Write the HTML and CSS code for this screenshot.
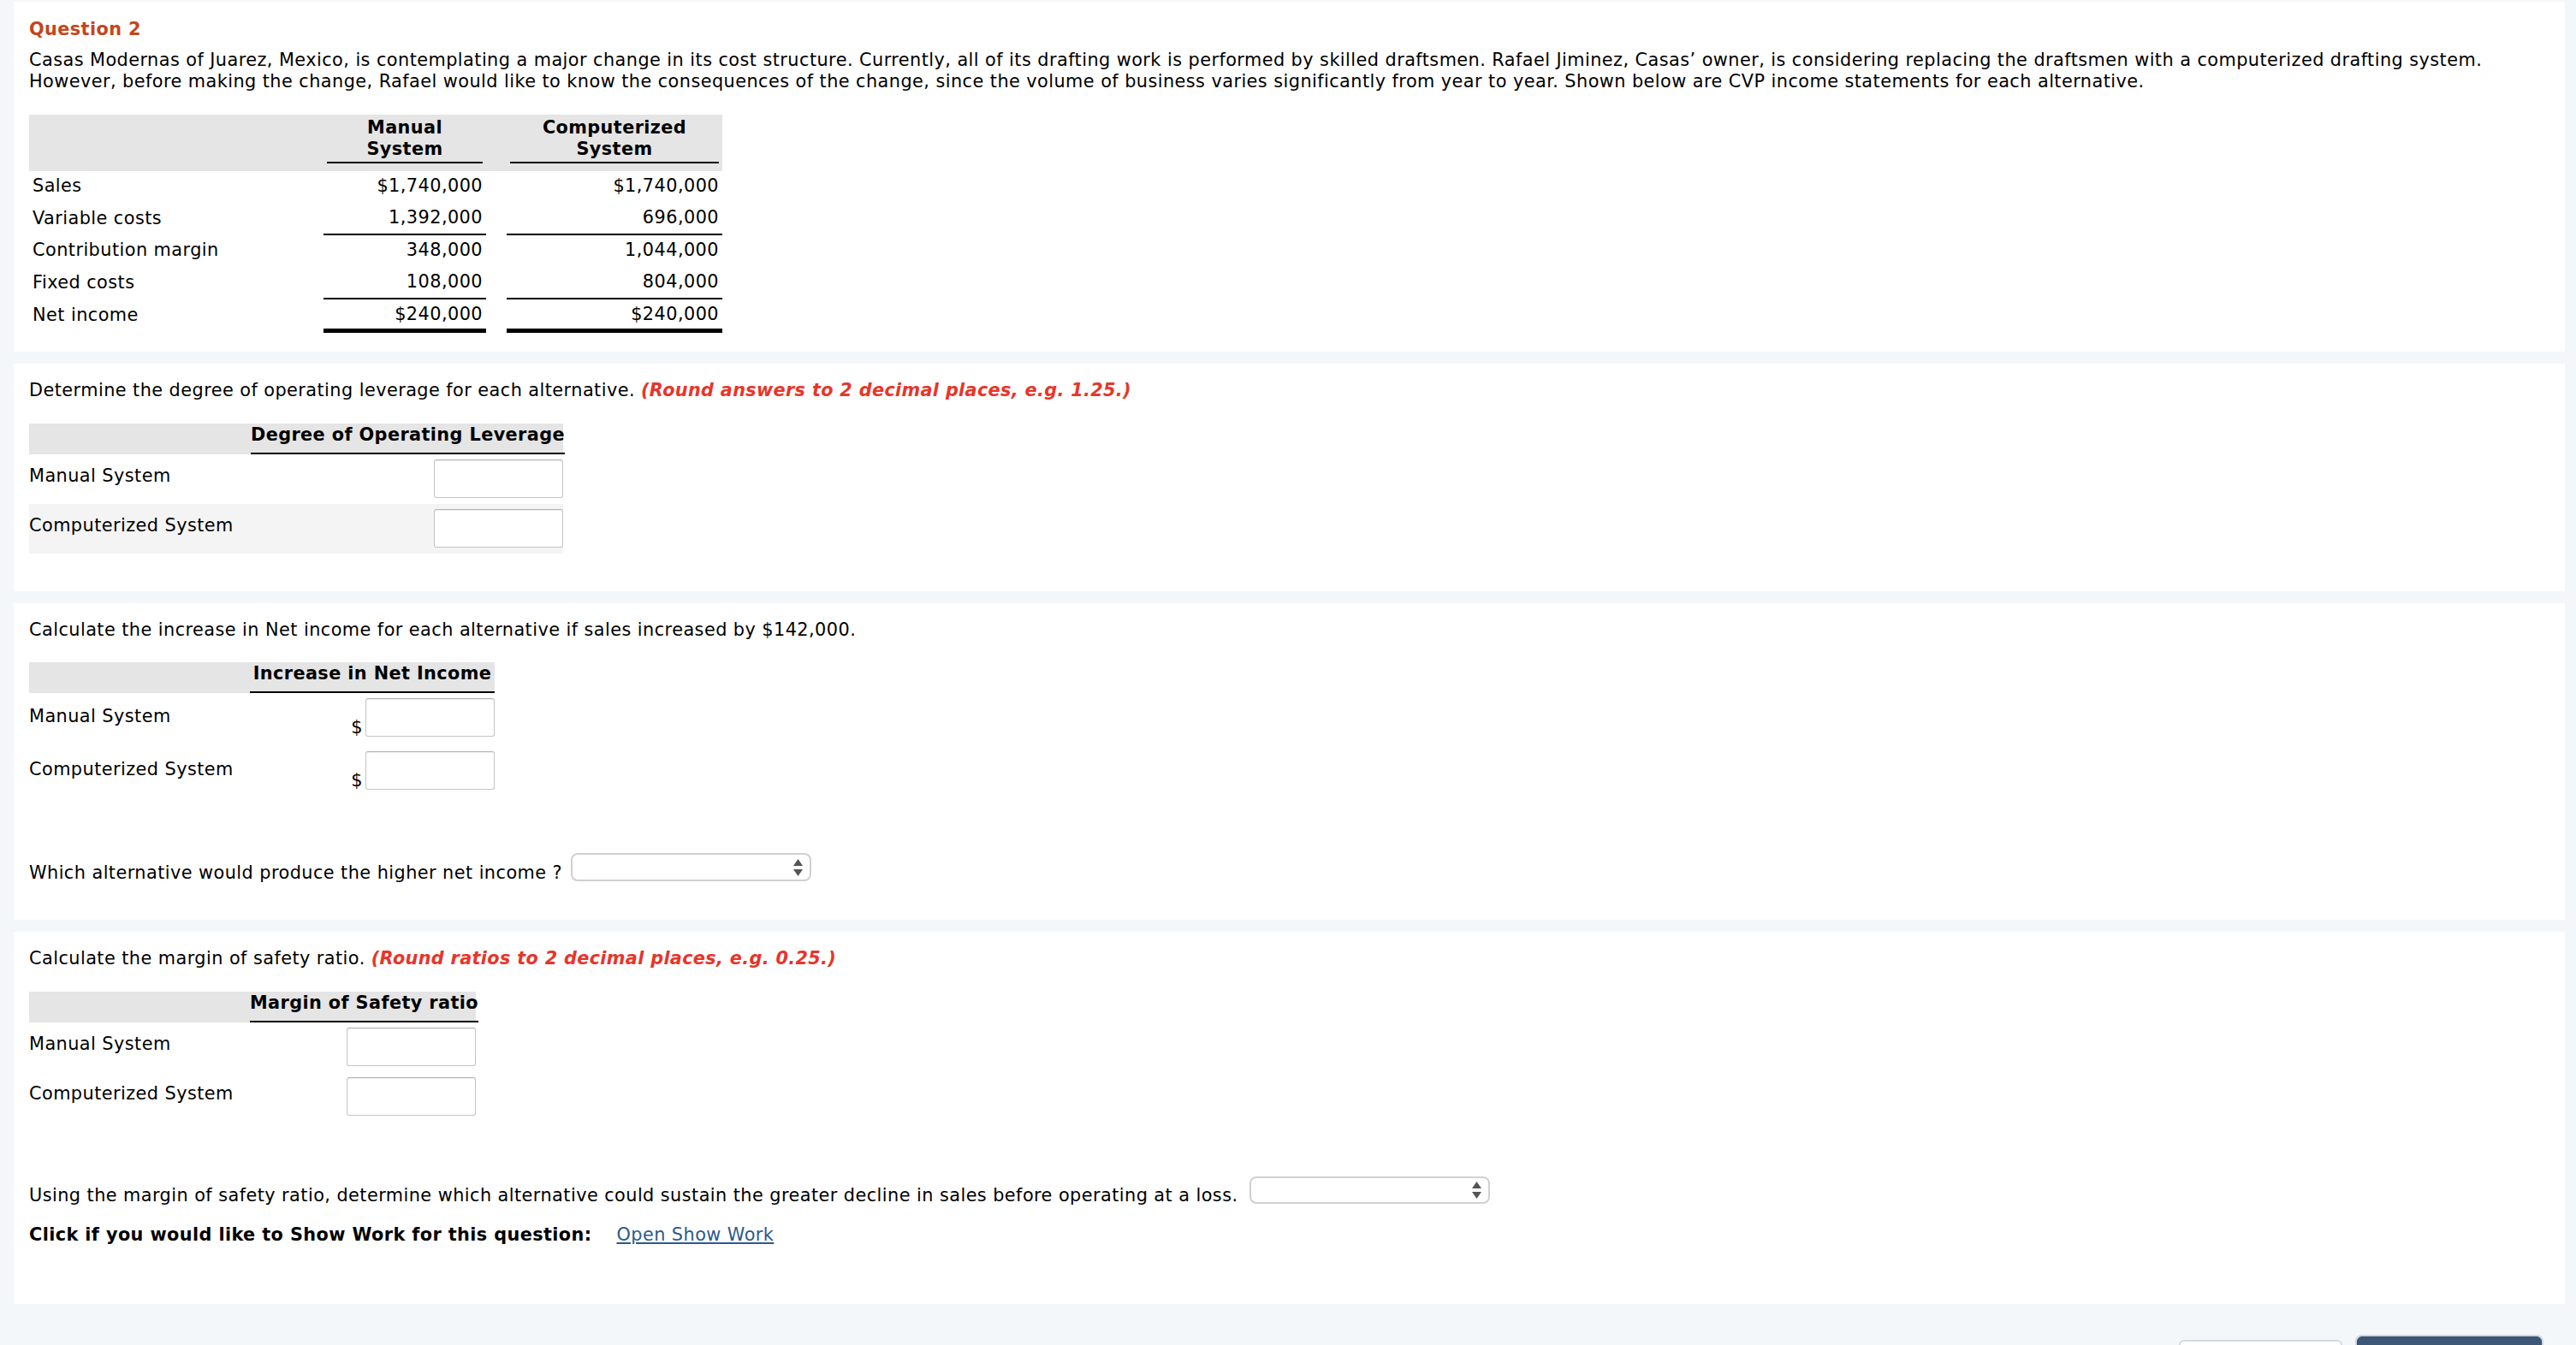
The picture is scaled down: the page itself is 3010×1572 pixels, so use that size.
FILE: index.html
```html
<!DOCTYPE html>
<html lang="en">
<head>
<meta charset="utf-8">
<title>Question 2</title>
<link rel="stylesheet" href="styles.css">
</head>
<body>
<div class="page">
  <section class="panel panel-intro">
    <h2 class="q-title">Question 2</h2>
    <p class="intro">Casas Modernas of Juarez, Mexico, is contemplating a major change in its cost structure. Currently, all of its drafting work is performed by skilled draftsmen. Rafael Jiminez, Casas’ owner, is considering replacing the draftsmen with a computerized drafting system. However, before making the change, Rafael would like to know the consequences of the change, since the volume of business varies significantly from year to year. Shown below are CVP income statements for each alternative.</p>
    <table class="cvp">
      <colgroup>
        <col class="c-label"><col class="c-man"><col class="c-gap"><col class="c-comp">
      </colgroup>
      <thead>
        <tr>
          <th></th>
          <th><span class="h">Manual<br>System</span></th>
          <th></th>
          <th><span class="h">Computerized<br>System</span></th>
        </tr>
      </thead>
      <tbody>
        <tr><td>Sales</td><td class="num">$1,740,000</td><td></td><td class="num">$1,740,000</td></tr>
        <tr class="sub"><td>Variable costs</td><td class="num">1,392,000</td><td></td><td class="num">696,000</td></tr>
        <tr><td>Contribution margin</td><td class="num">348,000</td><td></td><td class="num">1,044,000</td></tr>
        <tr class="sub"><td>Fixed costs</td><td class="num">108,000</td><td></td><td class="num">804,000</td></tr>
        <tr class="total"><td>Net income</td><td class="num">$240,000</td><td></td><td class="num">$240,000</td></tr>
      </tbody>
    </table>
  </section>

  <section class="panel panel-dol">
    <p class="prompt">Determine the degree of operating leverage for each alternative. <span class="hint">(Round answers to 2 decimal places, e.g. 1.25.)</span></p>
    <div class="qtable qt-dol">
      <div class="qt-head"><div class="qt-label"></div><div class="qt-col">Degree of Operating Leverage</div></div>
      <div class="qt-row"><div class="qt-label">Manual System</div><div class="qt-cell"><input class="box" type="text"></div></div>
      <div class="qt-row qt-alt"><div class="qt-label">Computerized System</div><div class="qt-cell"><input class="box" type="text"></div></div>
    </div>
  </section>

  <section class="panel panel-inc">
    <p class="prompt">Calculate the increase in Net income for each alternative if sales increased by $142,000.</p>
    <div class="qtable qt-inc">
      <div class="qt-head"><div class="qt-label"></div><div class="qt-col">Increase in Net Income</div></div>
      <div class="qt-row qt-tall"><div class="qt-label">Manual System</div><div class="qt-cell qt-money"><span class="dollar">$</span><input class="box" type="text"></div></div>
      <div class="qt-row qt-tall"><div class="qt-label">Computerized System</div><div class="qt-cell qt-money"><span class="dollar">$</span><input class="box" type="text"></div></div>
    </div>
    <div class="choice choice-inc">
      <span>Which alternative would produce the higher net income ?</span>
      <div class="select"><svg class="arrows" width="11" height="20" viewBox="0 0 11 20"><path d="M5.5 0 L11 8 L0 8 Z" fill="#555"/><path d="M0 12 L11 12 L5.5 20 Z" fill="#555"/></svg></div>
    </div>
  </section>

  <section class="panel panel-mos">
    <p class="prompt">Calculate the margin of safety ratio. <span class="hint">(Round ratios to 2 decimal places, e.g. 0.25.)</span></p>
    <div class="qtable qt-mos">
      <div class="qt-head"><div class="qt-label"></div><div class="qt-col">Margin of Safety ratio</div></div>
      <div class="qt-row"><div class="qt-label">Manual System</div><div class="qt-cell"><input class="box" type="text"></div></div>
      <div class="qt-row"><div class="qt-label">Computerized System</div><div class="qt-cell"><input class="box" type="text"></div></div>
    </div>
    <div class="choice choice-mos">
      <span>Using the margin of safety ratio, determine which alternative could sustain the greater decline in sales before operating at a loss.</span>
      <div class="select"><svg class="arrows" width="11" height="20" viewBox="0 0 11 20"><path d="M5.5 0 L11 8 L0 8 Z" fill="#555"/><path d="M0 12 L11 12 L5.5 20 Z" fill="#555"/></svg></div>
    </div>
    <p class="showwork"><b class="sw-label">Click if you would like to Show Work for this question:</b><a class="link" href="#">Open Show Work</a></p>
  </section>

  <div class="footer">
    <button class="btn btn-secondary" type="button" aria-label="Save for Later"></button>
    <button class="btn btn-primary" type="button" aria-label="Submit Answer"></button>
  </div>
</div>
</body>
</html>
```
FILE: styles.css
```css
* { box-sizing: border-box; }
html, body { margin: 0; padding: 0; }
body {
  background: #f4f7fa;
  font-family: "DejaVu Sans", Verdana, sans-serif;
  font-size: 20.8px;
  line-height: 25.6px;
  letter-spacing: 0.45px;
  color: #000;
}
.page {
  padding: 2px 13px 0 16px;
  display: flex;
  flex-direction: column;
  gap: 14px;
}
.panel {
  background: #fff;
  padding: 19px 18px 0 18px;
}
.panel-intro { padding-top: 20px; padding-bottom: 22px; }
.panel-dol { padding-bottom: 44px; }
.panel-inc { padding-bottom: 42px; }
.panel-mos { padding-bottom: 68px; }

.q-title {
  margin: 0 0 10px;
  font-size: 20.8px;
  line-height: 25.6px;
  font-weight: bold;
  letter-spacing: 0.4px;
  color: #c4451c;
}
.intro { margin: 0 0 25px; }
.prompt { margin: 0 0 25px; }
.hint { color: #e8352a; font-weight: bold; font-style: italic; letter-spacing: 0.33px; }

/* CVP table */
.cvp { border-collapse: separate; border-spacing: 0; }
.c-label { width: 344px; }
.c-man { width: 190px; }
.c-gap { width: 24px; }
.c-comp { width: 252px; }
.cvp th {
  background: #e5e5e5;
  padding: 3px 4px 9px;
  font-weight: bold;
  letter-spacing: 0.4px;
  vertical-align: bottom;
}
.cvp th .h {
  display: block;
  text-align: center;
  border-bottom: 2px solid #000;
  padding-bottom: 1px;
}
.cvp td {
  padding: 5px 4px 6px;
  white-space: nowrap;
}
.cvp td.num { text-align: right; }
.cvp tr.sub td.num { border-bottom: 2px solid #000; }
.cvp tr.total td.num { border-bottom: 5px solid #000; padding-bottom: 3px; }

/* answer tables */
.qtable { display: flex; flex-direction: column; }
.qt-dol { width: 624px; }
.qt-inc { width: 544px; }
.qt-mos { width: 522px; }
.qt-head {
  display: flex;
  background: #e5e5e5;
  height: 36px;
}
.qt-label { width: 258px; flex: none; }
.qt-dol .qt-label { width: 259px; }
.qt-col {
  flex: 1;
  font-weight: bold;
  letter-spacing: 0.4px;
  text-align: center;
  white-space: nowrap;
  padding-top: 1px;
  border-bottom: 2px solid #000;
}
.qt-row {
  display: flex;
  align-items: flex-start;
  height: 58px;
}
.qt-row .qt-label { padding-top: 13.5px; }
.qt-alt { background: #f4f4f4; }
.qt-cell {
  flex: 1;
  display: flex;
  justify-content: flex-end;
  padding-top: 6px;
}
.qt-tall { height: 62px; }
.qt-tall .qt-label { padding-top: 15px; }
.qt-money { align-items: flex-end; gap: 3px; }
.dollar { margin-bottom: -2px; }
.box {
  width: 151px;
  height: 45px;
  margin: 0;
  padding: 0 6px;
  border: 1px solid #c4c4c4;
  border-top-color: #b3b3b3;
  border-radius: 3px;
  background: #fff;
  box-shadow: inset 0 1px 1px rgba(0,0,0,0.07);
  font: inherit;
}

/* selects */
.choice {
  display: flex;
  align-items: flex-end;
  gap: 10px;
}
.choice-inc { margin-top: 63px; }
.choice-mos { margin-top: 64px; gap: 13px; }
.select {
  width: 281px;
  height: 33px;
  margin-bottom: 3px;
  border: 2px solid #d0d0d0;
  border-radius: 8px;
  background: #fff;
  display: flex;
  align-items: center;
  justify-content: flex-end;
  padding-right: 8px;
}
.choice-mos .select { height: 32px; margin-bottom: 4px; }

.showwork {
  margin: 20px 0 0;
  display: flex;
  gap: 29px;
}
.sw-label { letter-spacing: 0.4px; }
.link { color: #2b5a8b; text-decoration: underline; }

/* footer */
.footer {
  display: flex;
  justify-content: flex-end;
  align-items: center;
  gap: 17px;
  padding: 24px 27px 40px 0;
}
.btn {
  font: inherit;
  border-radius: 6px;
  padding: 0 20px;
}
.btn-secondary {
  width: 191px;
  height: 40px;
  background: #fff;
  border: 2px solid #d3dae2;
}
.btn-primary {
  width: 216px;
  height: 48px;
  background: #3d5876;
  border: 1px solid #34506e;
  box-shadow: 0 0 0 2px #cfd6de;
}
```
